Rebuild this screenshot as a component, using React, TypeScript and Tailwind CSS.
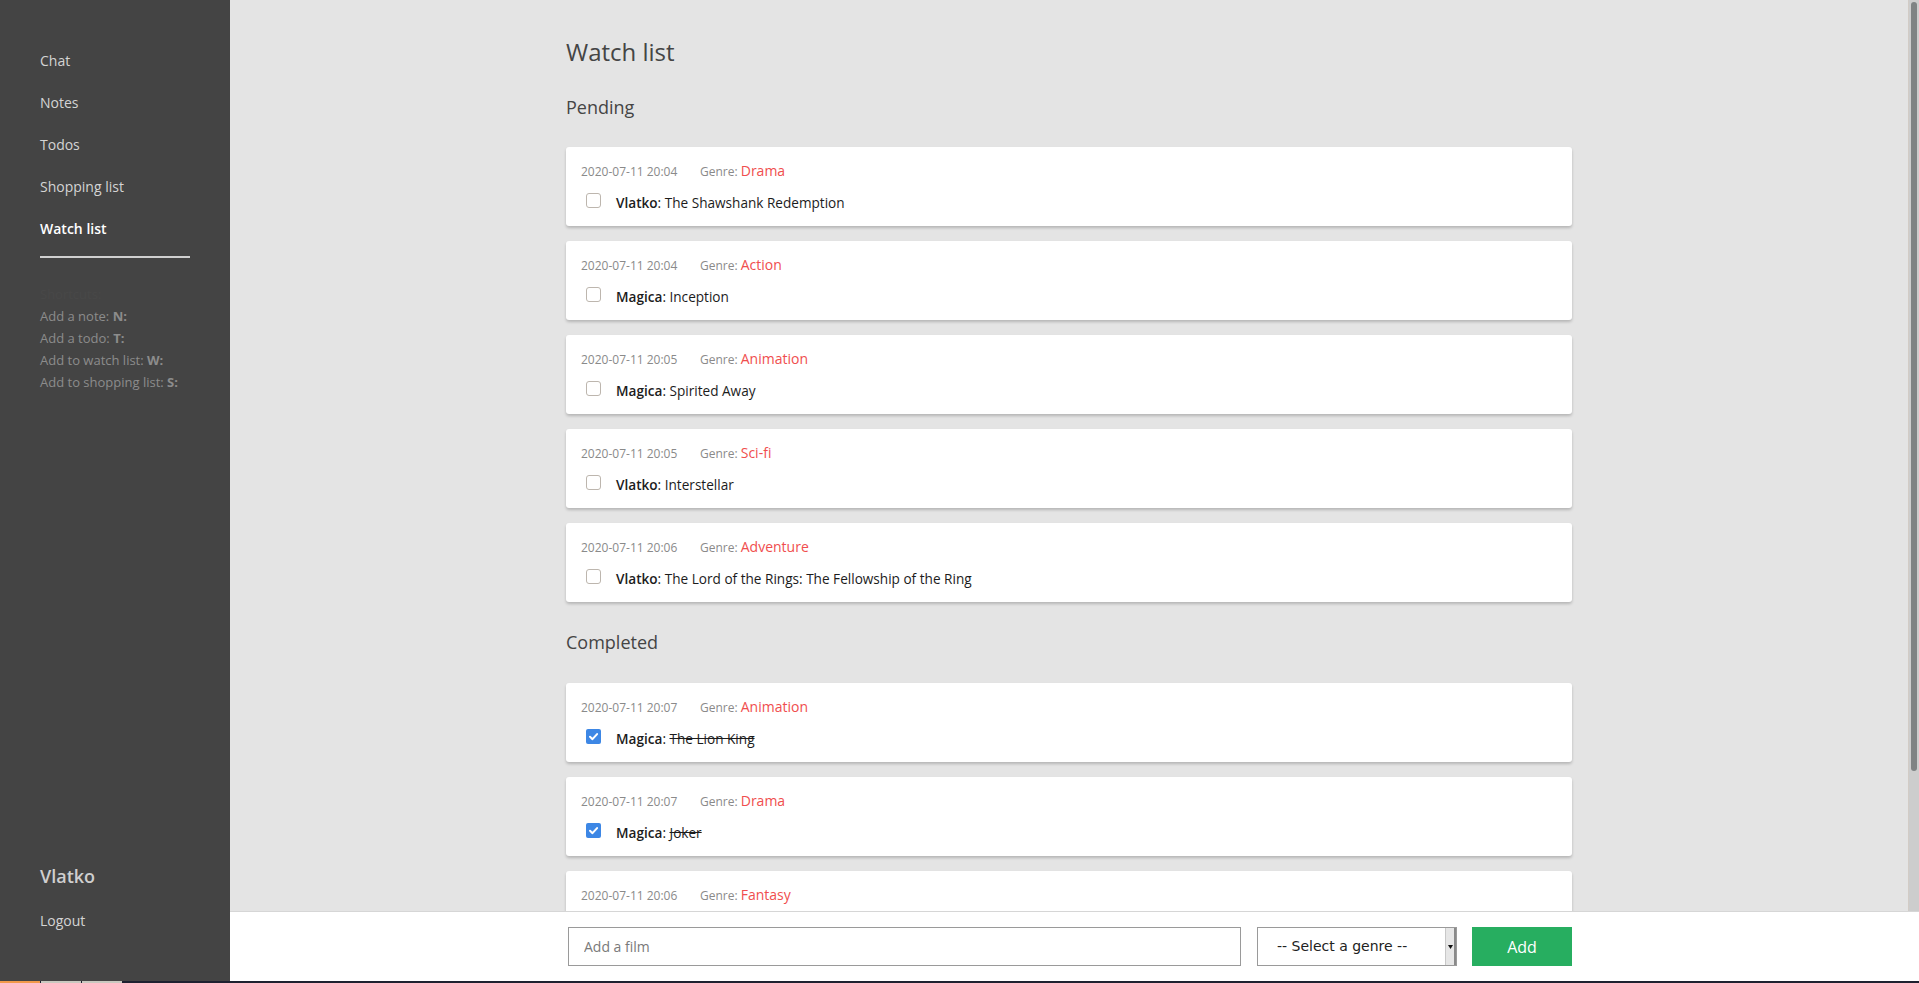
import { useState } from "react";

type Film = {
  id: number;
  date: string;
  genre: string;
  user: string;
  title: string;
  done: boolean;
};

const films: Film[] = [
  { id: 1, date: "2020-07-11 20:04", genre: "Drama", user: "Vlatko", title: "The Shawshank Redemption", done: false },
  { id: 2, date: "2020-07-11 20:04", genre: "Action", user: "Magica", title: "Inception", done: false },
  { id: 3, date: "2020-07-11 20:05", genre: "Animation", user: "Magica", title: "Spirited Away", done: false },
  { id: 4, date: "2020-07-11 20:05", genre: "Sci-fi", user: "Vlatko", title: "Interstellar", done: false },
  { id: 5, date: "2020-07-11 20:06", genre: "Adventure", user: "Vlatko", title: "The Lord of the Rings: The Fellowship of the Ring", done: false },
  { id: 6, date: "2020-07-11 20:07", genre: "Animation", user: "Magica", title: "The Lion King", done: true },
  { id: 7, date: "2020-07-11 20:07", genre: "Drama", user: "Magica", title: "Joker", done: true },
  { id: 8, date: "2020-07-11 20:06", genre: "Fantasy", user: "Vlatko", title: "Harry Potter", done: true },
];

const navItems = ["Chat", "Notes", "Todos", "Shopping list", "Watch list"];

const shortcuts = [
  { label: "Add a note: ", key: "N:" },
  { label: "Add a todo: ", key: "T:" },
  { label: "Add to watch list: ", key: "W:" },
  { label: "Add to shopping list: ", key: "S:" },
];

function Checkbox({ checked }: { checked: boolean }) {
  if (checked) {
    return (
      <div className="flex h-[15px] w-[15px] shrink-0 items-center justify-center rounded-[2px] bg-[#3d87e5]">
        <svg width="11" height="11" viewBox="0 0 12 12">
          <path d="M2.2 6.3 L4.9 8.9 L9.9 3.4" fill="none" stroke="white" strokeWidth="2.2" strokeLinecap="round" strokeLinejoin="round" />
        </svg>
      </div>
    );
  }
  return <div className="h-[15px] w-[15px] shrink-0 rounded-[3px] border border-[#bdb6ae] bg-white" />;
}

function FilmCard({ film }: { film: Film }) {
  return (
    <div className="rounded-[3px] bg-white px-[15px] pt-[16px] pb-[17px] shadow-[0_2px_3px_rgba(0,0,0,0.2)]">
      <div className="flex h-[16px] items-baseline text-[12px] leading-[16px] text-[#8a8a8a]">
        <span className="w-[119px]">{film.date}</span>
        <span>Genre:&nbsp;</span>
        <span className="text-[14px] leading-[16px] text-[#f04e4e]">{film.genre}</span>
      </div>
      <div className="mt-[12px] flex h-[18px] items-center pl-[5px]">
        <Checkbox checked={film.done} />
        <div className="ml-[15px] pt-[6px] text-[13.6px] leading-[18px] text-[#1c1c1c]">
          <span className="font-semibold">{film.user}</span>:{" "}
          <span className={film.done ? "line-through" : ""}>{film.title}</span>
        </div>
      </div>
    </div>
  );
}

export default function App() {
  const [film, setFilm] = useState("");
  const pending = films.filter((f) => !f.done);
  const completed = films.filter((f) => f.done);

  return (
    <div className="flex h-screen flex-col overflow-hidden font-['Open_Sans',sans-serif]">
      <div className="flex min-h-0 flex-1">
        {/* sidebar */}
        <aside className="flex w-[230px] shrink-0 flex-col justify-between bg-[#444444] px-[40px] pb-[50px]">
          <div>
            <nav className="flex flex-col gap-[22px] pt-[51px]">
              {navItems.map((item) => (
                <div
                  key={item}
                  className={
                    item === "Watch list"
                      ? "text-[14px] leading-[20px] font-semibold text-white"
                      : "text-[14px] leading-[20px] text-[#d4d4d4]"
                  }
                >
                  {item}
                </div>
              ))}
            </nav>
            <div className="mt-[17px] h-[2px] w-[150px] bg-[#d0d0d0]" />
            <div className="mt-[25px] text-[13px] leading-[22px] text-[#8c8c8c]">
              <div className="text-[#484848]">Shortcuts:</div>
              {shortcuts.map((s) => (
                <div key={s.key}>
                  {s.label}
                  <span className="font-bold">{s.key}</span>
                </div>
              ))}
            </div>
          </div>
          <div>
            <div className="text-[18px] leading-[24px] font-semibold text-[#cfcfcf]">Vlatko</div>
            <div className="mt-[23px] text-[14px] leading-[20px] text-[#d4d4d4]">Logout</div>
          </div>
        </aside>

        {/* main */}
        <div className="flex min-w-0 flex-1 flex-col">
          <div className="flex min-h-0 flex-1">
            <main className="min-w-0 flex-1 overflow-hidden bg-[#e4e4e4]">
              <div className="mx-auto w-[1006px] pt-[36px]">
                <h1 className="text-[24px] leading-[32px] text-[#454545]">Watch list</h1>
                <h2 className="mt-[27px] text-[18px] leading-[24px] text-[#454545]">Pending</h2>
                <div className="mt-[28px] flex flex-col gap-[15px]">
                  {pending.map((f) => (
                    <FilmCard key={f.id} film={f} />
                  ))}
                </div>
                <h2 className="mt-[28px] text-[18px] leading-[24px] text-[#454545]">Completed</h2>
                <div className="mt-[29px] flex flex-col gap-[15px]">
                  {completed.map((f) => (
                    <FilmCard key={f.id} film={f} />
                  ))}
                </div>
              </div>
            </main>
            {/* scrollbar */}
            <div className="flex w-[11px] shrink-0 flex-col border-l border-[#d2ccc6] bg-[#cdcdcd] px-[2px] pt-[2px]">
              <div className="h-[769px] rounded-[3px] bg-[#7f8384]" />
            </div>
          </div>

          {/* add form */}
          <footer className="flex h-[70px] shrink-0 items-center border-t border-[#d6d6d6] bg-white pl-[338px]">
            <input
              value={film}
              onChange={(e) => setFilm(e.target.value)}
              placeholder="Add a film"
              className="h-[39px] w-[673px] shrink-0 border border-[#9a9a9a] px-[15px] text-[14px] text-[#333] outline-none placeholder:text-[#7a7a7a]"
            />
            <div className="ml-[16px] flex h-[39px] w-[200px] shrink-0 border border-[#9a9a9a] bg-white">
              <div className="flex flex-1 items-center pl-[19px] font-['DejaVu_Sans',sans-serif] text-[14px] whitespace-nowrap text-[#222]">
                -- Select a genre --
              </div>
              <div className="flex w-[11px] items-center justify-center border-l border-[#c8c8c8] border-r-2 border-r-[#8a8a8a] bg-[#e6e6e6]">
                <svg width="5" height="4" viewBox="0 0 5 4">
                  <path d="M0 0 L5 0 L2.5 4 Z" fill="#111" />
                </svg>
              </div>
            </div>
            <button className="ml-[15px] flex h-[39px] w-[100px] shrink-0 items-center justify-center bg-[#27ae60] text-[16px] text-white">
              Add
            </button>
          </footer>
        </div>
      </div>
      {/* bottom strip */}
      <div className="flex h-[2px] shrink-0 bg-[#1e2130]">
        <div className="w-[40px] bg-[#f2994a]" />
        <div className="ml-[1px] w-[40px] bg-[#c9c9c0]" />
        <div className="ml-[1px] w-[40px] bg-[#c9c9c0]" />
      </div>
    </div>
  );
}
